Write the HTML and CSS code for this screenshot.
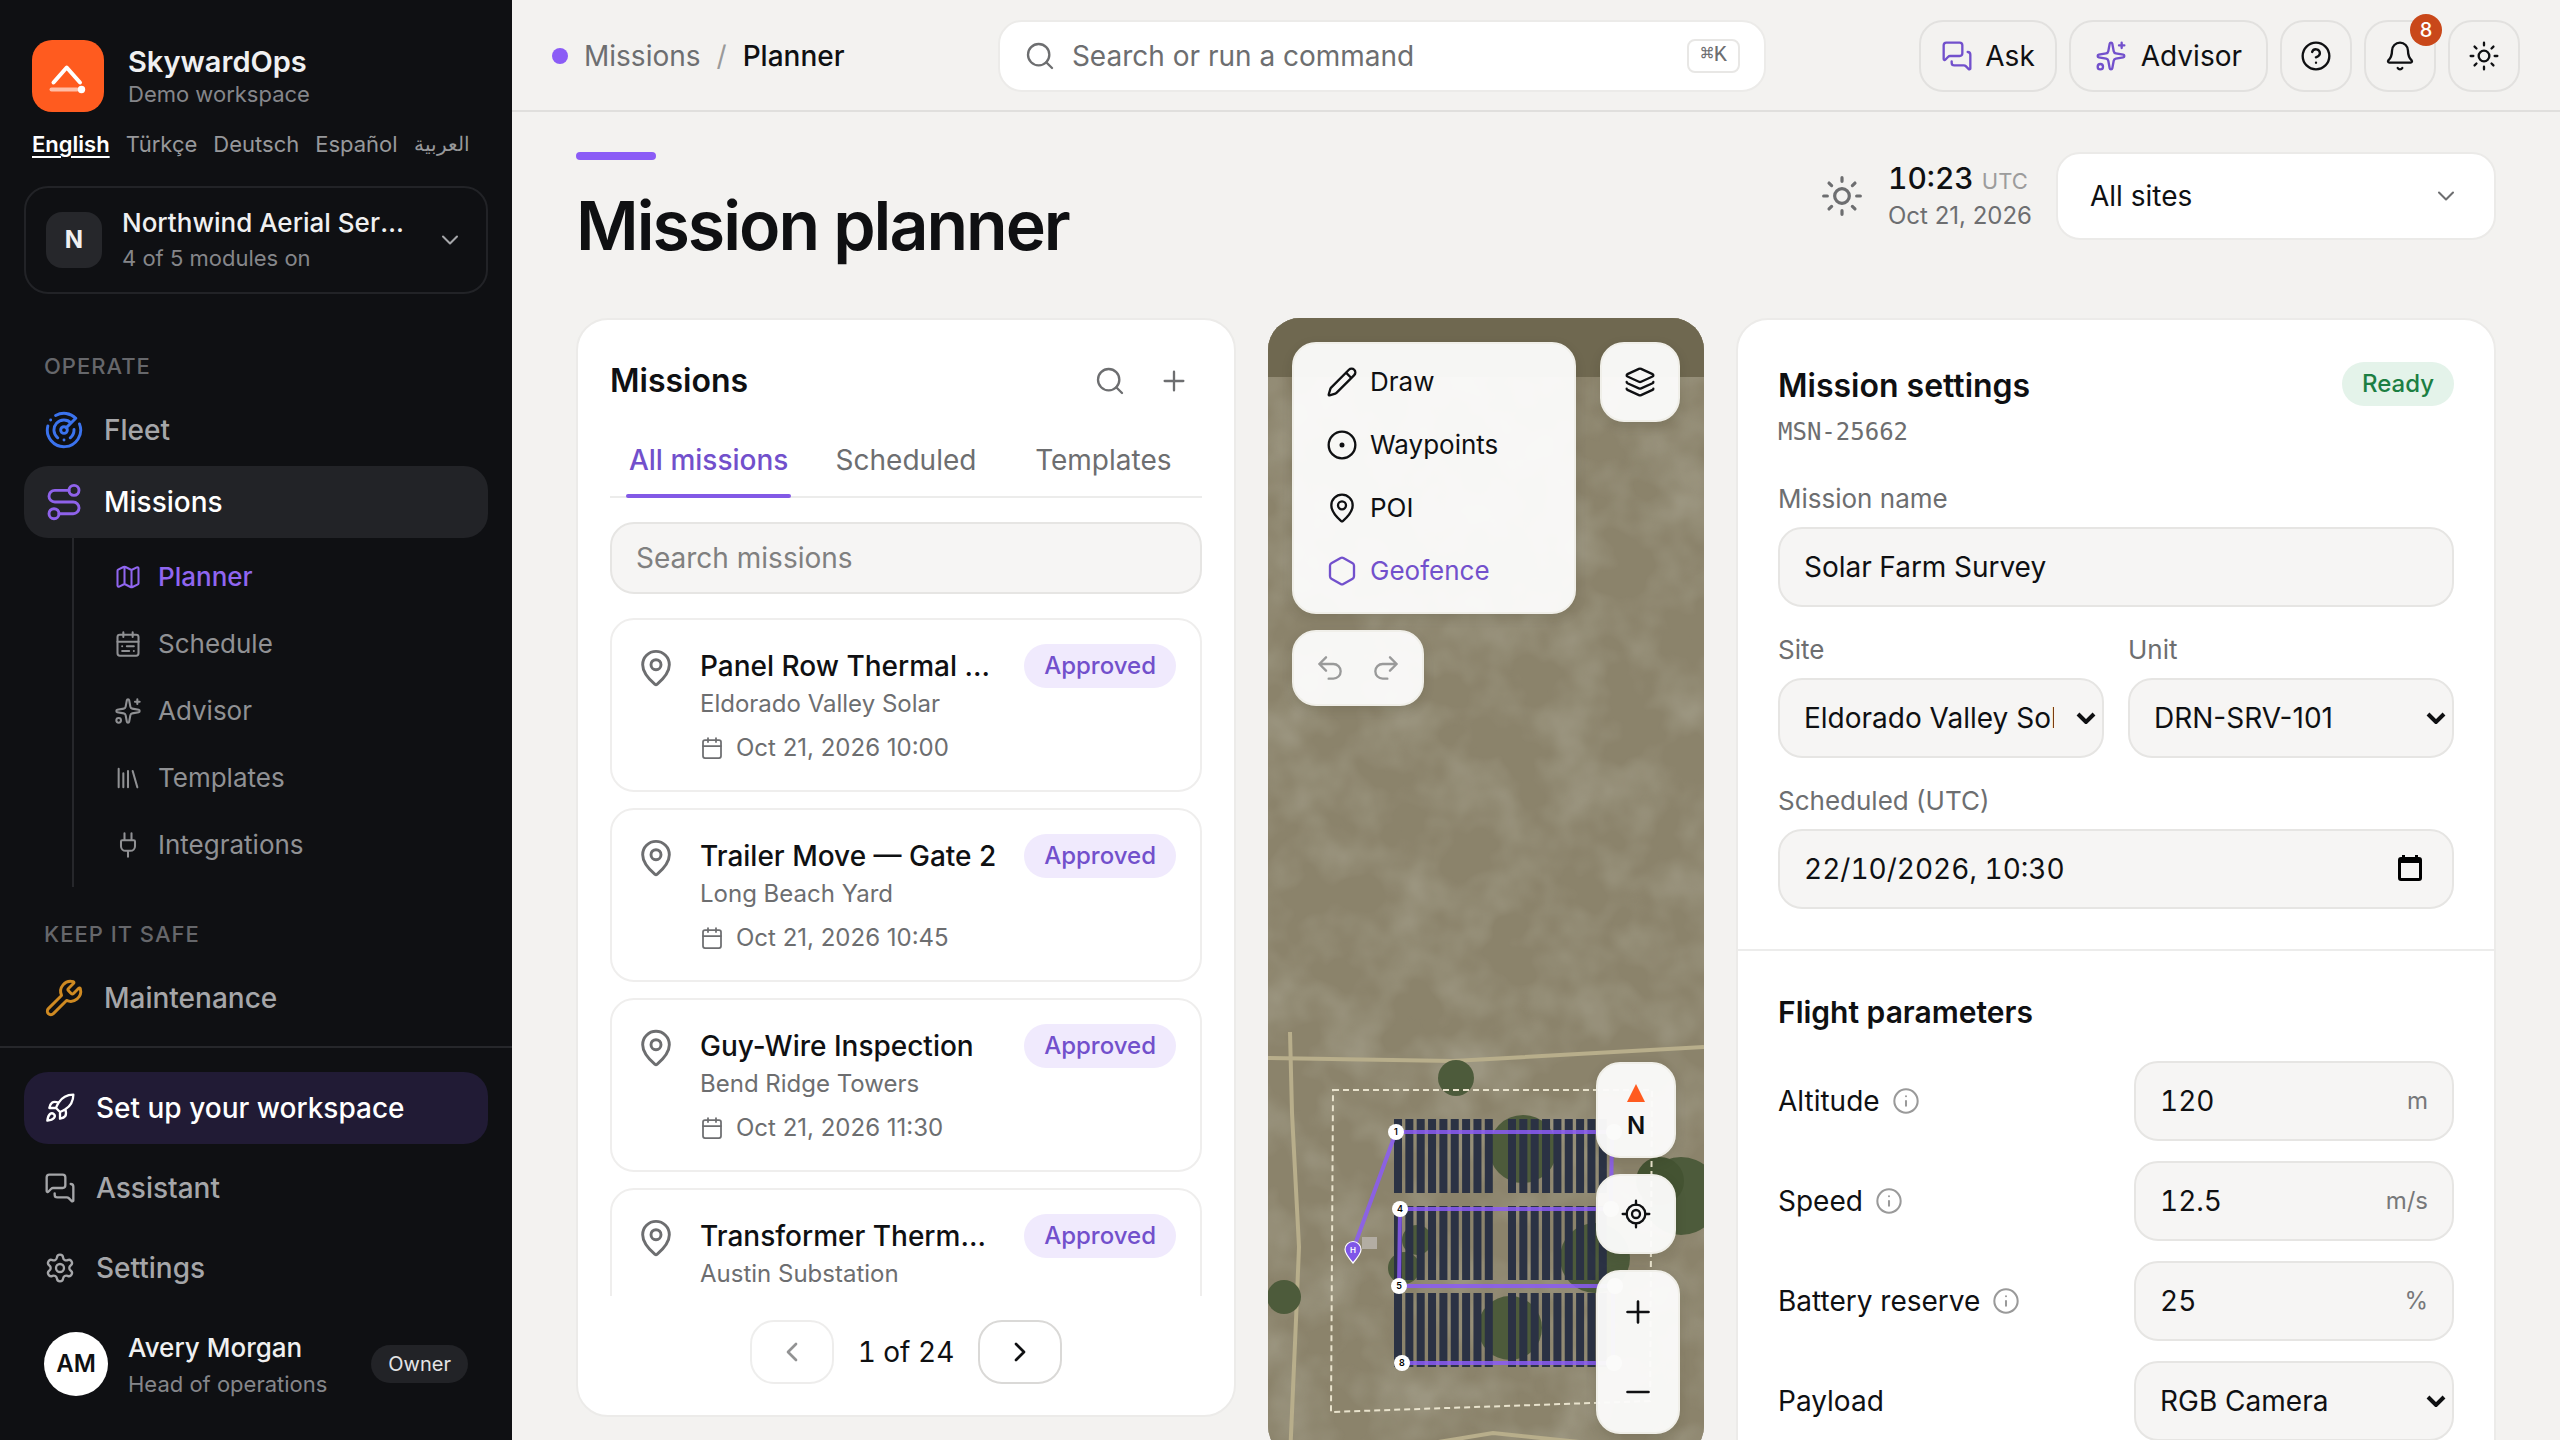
FILE: index.html
```html
<!DOCTYPE html>
<html lang="en">
<head>
<meta charset="utf-8">
<meta name="viewport" content="width=device-width, initial-scale=1">
<title>Mission planner – SkywardOps</title>
<link rel="stylesheet" href="styles.css">
</head>
<body>
<svg class="sprite" aria-hidden="true">
  <symbol id="i-radar" viewBox="0 0 24 24"><path d="M19.07 4.93A10 10 0 0 0 6.99 3.34M4 6h.01M2.29 9.62A10 10 0 1 0 21.31 8.35M16.24 7.76A6 6 0 1 0 8.23 16.67M12 18h.01M17.99 11.66A6 6 0 0 1 15.77 16.67M13.41 10.59l5.66-5.66"/><circle cx="12" cy="12" r="2"/></symbol>
  <symbol id="i-route" viewBox="0 0 24 24"><circle cx="6" cy="19" r="3"/><path d="M9 19h8.500a3.500 3.500 0 0 0 0-7h-11a3.500 3.500 0 0 1 0-7H15"/><circle cx="18" cy="5" r="3"/></symbol>
  <symbol id="i-map" viewBox="0 0 24 24"><path d="M14.106 5.553a2 2 0 0 0 1.788 0l3.659-1.830A1 1 0 0 1 21 4.619v12.764a1 1 0 0 1-.553.894l-4.553 2.277a2 2 0 0 1-1.788 0l-4.212-2.106a2 2 0 0 0-1.788 0l-3.659 1.830A1 1 0 0 1 3 19.381V6.618a1 1 0 0 1 .553-.894l4.553-2.277a2 2 0 0 1 1.788 0zM15 5.764v15M9 3.236v15"/></symbol>
  <symbol id="i-schedule" viewBox="0 0 24 24"><rect x="3" y="4" width="18" height="18" rx="2"/><path d="M16 2v4M3 10h18M8 2v4M17 14h-6M13 18H7M7 14h.01M17 18h.01"/></symbol>
  <symbol id="i-sparkles" viewBox="0 0 24 24"><path d="M11.017 2.814a1 1 0 0 1 1.966 0l1.051 5.558a2 2 0 0 0 1.594 1.594l5.558 1.051a1 1 0 0 1 0 1.966l-5.558 1.051a2 2 0 0 0-1.594 1.594l-1.051 5.558a1 1 0 0 1-1.966 0l-1.051-5.558a2 2 0 0 0-1.594-1.594l-5.558-1.051a1 1 0 0 1 0-1.966l5.558-1.051a2 2 0 0 0 1.594-1.594zM20 2v4M22 4h-4"/><circle cx="4" cy="20" r="2"/></symbol>
  <symbol id="i-library" viewBox="0 0 24 24"><path d="M16 6l4 14M12 6v14M8 8v12M4 4v16"/></symbol>
  <symbol id="i-plug" viewBox="0 0 24 24"><path d="M12 22v-5M9 8V2M15 8V2M17 8a1 1 0 0 1 1 1v4a4 4 0 0 1-4 4h-4a4 4 0 0 1-4-4V9a1 1 0 0 1 1-1z"/></symbol>
  <symbol id="i-wrench" viewBox="0 0 24 24"><path d="M14.7 6.3a1 1 0 0 0 0 1.400l1.600 1.600a1 1 0 0 0 1.400 0l3.106-3.105c.32-.322.863-.22.983.218a6 6 0 0 1-8.259 7.057l-7.910 7.910a1 1 0 0 1-2.999-3l7.910-7.910a6 6 0 0 1 7.057-8.259c.438.12.54.662.219.984z"/></symbol>
  <symbol id="i-rocket" viewBox="0 0 24 24"><path d="M4.5 16.5c-1.500 1.260-2 5-2 5s3.740-.5 5-2c.71-.84.7-2.130-.09-2.910a2.180 2.180 0 0 0-2.910-.09zM12 15l-3-3a22 22 0 0 1 2-3.950A12.880 12.880 0 0 1 22 2c0 2.720-.78 7.500-6 11a22.350 22.350 0 0 1-4 2zM9 12H4s.55-3.030 2-4c1.620-1.080 5 0 5 0M12 15v5s3.030-.55 4-2c1.080-1.620 0-5 0-5"/></symbol>
  <symbol id="i-chat" viewBox="0 0 24 24"><path d="M16 10a2 2 0 0 1-2 2H6.828a2 2 0 0 0-1.414.586l-2.202 2.202A.71.71 0 0 1 2 14.286V4a2 2 0 0 1 2-2h10a2 2 0 0 1 2 2zM20 9a2 2 0 0 1 2 2v10.286a.71.71 0 0 1-1.212.502l-2.202-2.202A2 2 0 0 0 17.172 19H10a2 2 0 0 1-2-2v-1"/></symbol>
  <symbol id="i-gear" viewBox="0 0 24 24"><path d="M9.671 4.136a2.340 2.340 0 0 1 4.659 0 2.340 2.340 0 0 0 3.319 1.915 2.340 2.340 0 0 1 2.330 4.033 2.340 2.340 0 0 0 0 3.831 2.340 2.340 0 0 1-2.330 4.033 2.340 2.340 0 0 0-3.319 1.915 2.340 2.340 0 0 1-4.659 0 2.340 2.340 0 0 0-3.320-1.915 2.340 2.340 0 0 1-2.330-4.033 2.340 2.340 0 0 0 0-3.831A2.340 2.340 0 0 1 6.350 6.051a2.340 2.340 0 0 0 3.319-1.915"/><circle cx="12" cy="12" r="3"/></symbol>
  <symbol id="i-search" viewBox="0 0 24 24"><circle cx="11" cy="11" r="8"/><path d="M21 21l-4.340-4.340"/></symbol>
  <symbol id="i-help" viewBox="0 0 24 24"><circle cx="12" cy="12" r="10"/><path d="M9.090 9a3 3 0 0 1 5.830 1c0 2-3 3-3 3M12 17h.01"/></symbol>
  <symbol id="i-bell" viewBox="0 0 24 24"><path d="M10.268 21a2 2 0 0 0 3.464 0M3.262 15.326A1 1 0 0 0 4 17h16a1 1 0 0 0 .74-1.673C19.410 13.956 18 12.499 18 8A6 6 0 0 0 6 8c0 4.499-1.411 5.956-2.738 7.326"/></symbol>
  <symbol id="i-sun" viewBox="0 0 24 24"><circle cx="12" cy="12" r="4"/><path d="M12 2v2M12 20v2M4.930 4.930l1.410 1.410M17.660 17.660l1.410 1.410M2 12h2M20 12h2M6.340 17.660l-1.410 1.410M19.070 4.930l-1.410 1.410"/></symbol>
  <symbol id="i-pin" viewBox="0 0 24 24"><path d="M20 10c0 4.993-5.539 10.193-7.399 11.799a1 1 0 0 1-1.202 0C9.539 20.193 4 14.993 4 10a8 8 0 0 1 16 0"/><circle cx="12" cy="10" r="3"/></symbol>
  <symbol id="i-calendar" viewBox="0 0 24 24"><path d="M8 2v4M16 2v4M3 10h18"/><rect x="3" y="4" width="18" height="18" rx="2"/></symbol>
  <symbol id="i-pencil" viewBox="0 0 24 24"><path d="M21.174 6.812a1 1 0 0 0-3.986-3.987L3.842 16.174a2 2 0 0 0-.5.83l-1.321 4.352a.5.5 0 0 0 .623.622l4.353-1.320a2 2 0 0 0 .83-.497zM15 5l4 4"/></symbol>
  <symbol id="i-dot" viewBox="0 0 24 24"><circle cx="12" cy="12" r="10"/><circle cx="12" cy="12" r="1"/></symbol>
  <symbol id="i-hexagon" viewBox="0 0 24 24"><path d="M21 16V8a2 2 0 0 0-1-1.730l-7-4a2 2 0 0 0-2 0l-7 4A2 2 0 0 0 3 8v8a2 2 0 0 0 1 1.730l7 4a2 2 0 0 0 2 0l7-4A2 2 0 0 0 21 16z"/></symbol>
  <symbol id="i-layers" viewBox="0 0 24 24"><path d="M12.830 2.180a2 2 0 0 0-1.660 0L2.600 6.080a1 1 0 0 0 0 1.830l8.580 3.910a2 2 0 0 0 1.660 0l8.580-3.900a1 1 0 0 0 0-1.830zM2 12a1 1 0 0 0 .58.91l8.600 3.910a2 2 0 0 0 1.650 0l8.580-3.900A1 1 0 0 0 22 12M2 17a1 1 0 0 0 .58.91l8.600 3.910a2 2 0 0 0 1.650 0l8.580-3.900A1 1 0 0 0 22 17"/></symbol>
  <symbol id="i-undo" viewBox="0 0 24 24"><path d="M9 14L4 9l5-5M4 9h10.500a5.500 5.500 0 0 1 0 11H11"/></symbol>
  <symbol id="i-redo" viewBox="0 0 24 24"><path d="M15 14l5-5-5-5M20 9H9.500a5.500 5.500 0 0 0 0 11H13"/></symbol>
  <symbol id="i-locate" viewBox="0 0 24 24"><path d="M2 12h3M19 12h3M12 2v3M12 19v3"/><circle cx="12" cy="12" r="7"/><circle cx="12" cy="12" r="3"/></symbol>
  <symbol id="i-info" viewBox="0 0 24 24"><circle cx="12" cy="12" r="10"/><path d="M12 16v-4M12 8h.01"/></symbol>
  <symbol id="i-plus" viewBox="0 0 24 24"><path d="M5 12h14M12 5v14"/></symbol>
  <symbol id="i-minus" viewBox="0 0 24 24"><path d="M5 12h14"/></symbol>
  <symbol id="i-down" viewBox="0 0 24 24"><path d="M6 9l6 6 6-6"/></symbol>
  <symbol id="i-left" viewBox="0 0 24 24"><path d="M15 18l-6-6 6-6"/></symbol>
  <symbol id="i-right" viewBox="0 0 24 24"><path d="M9 18l6-6-6-6"/></symbol>
</svg>

<div class="app">
  <aside class="sidebar">
    <div class="brand">
      <svg class="brand-mark" viewBox="0 0 72 72" aria-hidden="true">
        <rect width="72" height="72" rx="20" fill="#ff5b1f"/>
        <path d="M21.500 42.500L34.700 27.500 48 42.500" fill="none" stroke="#fff" stroke-width="4" stroke-linecap="round" stroke-linejoin="round"/>
        <path d="M19.500 49.500H45" stroke="#fff" stroke-opacity=".6" stroke-width="4" stroke-linecap="round"/>
        <circle cx="49.500" cy="49.500" r="3.700" fill="#fff"/>
      </svg>
      <div class="brand-text">
        <strong>SkywardOps</strong>
        <span>Demo workspace</span>
      </div>
    </div>
    <nav class="languages" aria-label="Language">
      <a class="current" href="#en">English</a>
      <a href="#tr">Türkçe</a>
      <a href="#de">Deutsch</a>
      <a href="#es">Español</a>
      <a href="#ar" lang="ar">العربية</a>
    </nav>
    <button class="workspace" type="button">
      <span class="workspace-tile">N</span>
      <span class="workspace-text">
        <span class="workspace-name">Northwind Aerial Services</span>
        <span class="workspace-sub">4 of 5 modules on</span>
      </span>
      <svg class="icon s28"><use href="#i-down"/></svg>
    </button>

    <nav class="nav" aria-label="Main">
      <h2>OPERATE</h2>
      <a class="nav-item" href="#fleet"><svg class="icon s40 blue"><use href="#i-radar"/></svg>Fleet</a>
      <a class="nav-item active" href="#missions"><svg class="icon s40 violet"><use href="#i-route"/></svg>Missions</a>
      <div class="subnav">
        <a class="current" href="#planner"><svg class="icon s28"><use href="#i-map"/></svg>Planner</a>
        <a href="#schedule"><svg class="icon s28"><use href="#i-schedule"/></svg>Schedule</a>
        <a href="#advisor"><svg class="icon s28"><use href="#i-sparkles"/></svg>Advisor</a>
        <a href="#templates"><svg class="icon s28"><use href="#i-library"/></svg>Templates</a>
        <a href="#integrations"><svg class="icon s28"><use href="#i-plug"/></svg>Integrations</a>
      </div>
      <h2>KEEP IT SAFE</h2>
      <a class="nav-item" href="#maintenance"><svg class="icon s40 amber"><use href="#i-wrench"/></svg>Maintenance</a>
    </nav>

    <div class="sidebar-foot">
      <a class="foot-item setup" href="#setup"><svg class="icon s32"><use href="#i-rocket"/></svg>Set up your workspace</a>
      <a class="foot-item" href="#assistant"><svg class="icon s32"><use href="#i-chat"/></svg>Assistant</a>
      <a class="foot-item" href="#settings"><svg class="icon s32"><use href="#i-gear"/></svg>Settings</a>
      <div class="profile">
        <span class="avatar">AM</span>
        <div class="profile-text">
          <strong>Avery Morgan</strong>
          <span>Head of operations</span>
        </div>
        <span class="role">Owner</span>
      </div>
    </div>
  </aside>

  <div class="main">
    <header class="topbar">
      <nav class="crumbs" aria-label="Breadcrumb">
        <span class="crumb-dot"></span>
        <a href="#missions">Missions</a>
        <span class="crumb-sep">/</span>
        <span class="crumb-current">Planner</span>
      </nav>
      <div class="command">
        <svg class="icon s32"><use href="#i-search"/></svg>
        <input type="text" placeholder="Search or run a command" aria-label="Search or run a command">
        <kbd>⌘K</kbd>
      </div>
      <div class="actions">
        <button class="action compact" type="button"><svg class="icon s32 purple"><use href="#i-chat"/></svg>Ask</button>
        <button class="action" type="button"><svg class="icon s32 purple"><use href="#i-sparkles"/></svg>Advisor</button>
        <button class="action square" type="button" aria-label="Help"><svg class="icon s32"><use href="#i-help"/></svg></button>
        <button class="action square" type="button" aria-label="Notifications"><svg class="icon s32"><use href="#i-bell"/></svg><span class="count">8</span></button>
        <button class="action square" type="button" aria-label="Theme"><svg class="icon s32"><use href="#i-sun"/></svg></button>
      </div>
    </header>

    <main class="content">
      <div class="page-head">
        <div class="page-title">
          <span class="accent"></span>
          <h1>Mission planner</h1>
        </div>
        <div class="page-tools">
          <svg class="icon weather"><use href="#i-sun"/></svg>
          <div class="clock">
            <div class="time">10:23 <span>UTC</span></div>
            <div class="date">Oct 21, 2026</div>
          </div>
          <div class="picker site-filter">
            <select aria-label="Sites"><option>All sites</option></select>
            <svg class="icon s28"><use href="#i-down"/></svg>
          </div>
        </div>
      </div>

      <div class="columns">
        <section class="card missions">
          <div class="missions-head">
            <h2>Missions</h2>
            <div class="head-buttons">
              <button type="button" aria-label="Search"><svg class="icon s32"><use href="#i-search"/></svg></button>
              <button type="button" aria-label="Add mission"><svg class="icon s32"><use href="#i-plus"/></svg></button>
            </div>
          </div>
          <div class="tabs" role="tablist">
            <button class="selected" type="button" role="tab" aria-selected="true">All missions</button>
            <button type="button" role="tab" aria-selected="false">Scheduled</button>
            <button type="button" role="tab" aria-selected="false">Templates</button>
          </div>
          <input class="mission-search" type="text" placeholder="Search missions" aria-label="Search missions">
          <ul class="mission-list">
            <li class="mission">
              <svg class="icon s40"><use href="#i-pin"/></svg>
              <div class="mission-body">
                <div class="mission-top"><h3>Panel Row Thermal Survey</h3><span class="badge">Approved</span></div>
                <p class="mission-site">Eldorado Valley Solar</p>
                <p class="mission-date"><svg class="icon s24"><use href="#i-calendar"/></svg>Oct 21, 2026 10:00</p>
              </div>
            </li>
            <li class="mission">
              <svg class="icon s40"><use href="#i-pin"/></svg>
              <div class="mission-body">
                <div class="mission-top"><h3>Trailer Move — Gate 2</h3><span class="badge">Approved</span></div>
                <p class="mission-site">Long Beach Yard</p>
                <p class="mission-date"><svg class="icon s24"><use href="#i-calendar"/></svg>Oct 21, 2026 10:45</p>
              </div>
            </li>
            <li class="mission">
              <svg class="icon s40"><use href="#i-pin"/></svg>
              <div class="mission-body">
                <div class="mission-top"><h3>Guy-Wire Inspection</h3><span class="badge">Approved</span></div>
                <p class="mission-site">Bend Ridge Towers</p>
                <p class="mission-date"><svg class="icon s24"><use href="#i-calendar"/></svg>Oct 21, 2026 11:30</p>
              </div>
            </li>
            <li class="mission">
              <svg class="icon s40"><use href="#i-pin"/></svg>
              <div class="mission-body">
                <div class="mission-top"><h3>Transformer Thermal Scan</h3><span class="badge">Approved</span></div>
                <p class="mission-site">Austin Substation</p>
              </div>
            </li>
          </ul>
          <div class="pager">
            <button type="button" disabled aria-label="Previous page"><svg class="icon s32"><use href="#i-left"/></svg></button>
            <span>1 of 24</span>
            <button type="button" aria-label="Next page"><svg class="icon s32"><use href="#i-right"/></svg></button>
          </div>
        </section>

        <section class="map" aria-label="Map">
          <svg class="terrain" viewBox="0 0 436 1140" preserveAspectRatio="xMidYMin slice" aria-hidden="true">
            <defs>
              <filter id="soil" x="0" y="0" width="100%" height="100%">
                <feTurbulence type="fractalNoise" baseFrequency=".018" numOctaves="3" seed="7"/>
                <feColorMatrix values="0 0 0 0 .42  0 0 0 0 .40  0 0 0 0 .31  2.200 0 0 0 -.85"/>
              </filter>
            </defs>
            <rect width="436" height="1140" fill="#8b836b"/>
            <rect width="436" height="1140" filter="url(#soil)" opacity=".5"/>
            <rect width="436" height="59" fill="#6f6850"/>
            <g fill="none" stroke="#b8ae8b" stroke-width="4">
              <path d="M22 714L24 795 31 929 28 1002 22 1140"/>
              <path d="M0 740L185 743 436 729"/>
              <path d="M140 1129L225 1115 340 1127"/>
            </g>
            <g fill="#4d5b3b">
              <circle cx="188" cy="760" r="18"/>
              <circle cx="255" cy="831" r="34"/>
              <circle cx="16" cy="979" r="17"/>
              <circle cx="413" cy="878" r="39"/>
              <circle cx="392" cy="863" r="24" fill="#445332"/>
              <circle cx="149" cy="922" r="15"/>
              <circle cx="136" cy="950" r="16"/>
              <circle cx="327" cy="940" r="35"/>
              <circle cx="242" cy="1010" r="32"/>
            </g>
            <g stroke="#2b3244" stroke-width="74" stroke-dasharray="8 3.350">
              <path d="M126 838H225M240 838H339M126 925H225M240 925H339M126 1012H225M240 1012H339"/>
            </g>
            <rect x="94" y="919" width="15" height="12" fill="#b3ada3"/>
            <path d="M65 772H384L382 1083 63 1094Z" fill="none" stroke="#e9e3cd" stroke-width="2" stroke-dasharray="6 4"/>
            <path d="M85 932L128 814H344L343 891H132L131 968H345V1045H134" fill="none" stroke="#8b5cf6" stroke-opacity=".85" stroke-width="4" stroke-linejoin="round"/>
            <g class="waypoints">
              <circle cx="128" cy="814" r="8"/><circle cx="346" cy="814" r="8"/>
              <circle cx="343" cy="891" r="8"/><circle cx="132" cy="891" r="8"/>
              <circle cx="131" cy="968" r="8"/><circle cx="347" cy="968" r="8"/>
              <circle cx="346" cy="1045" r="8"/><circle cx="134" cy="1045" r="8"/>
              <text x="128" y="817">1</text><text x="132" y="894">4</text>
              <text x="131" y="971">5</text><text x="134" y="1048">8</text>
            </g>
            <path d="M85 945C79 938 77 935 77 931.500a8 8 0 0 1 16 0C93 935 91 938 85 945z" fill="#7f56e8" stroke="#fff" stroke-width="1.200"/>
            <text class="home" x="85" y="935">H</text>
          </svg>
          <div class="map-top">
            <div class="map-left">
              <div class="map-panel tools">
                <button type="button"><svg class="icon s32"><use href="#i-pencil"/></svg>Draw</button>
                <button type="button"><svg class="icon s32"><use href="#i-dot"/></svg>Waypoints</button>
                <button type="button"><svg class="icon s32"><use href="#i-pin"/></svg>POI</button>
                <button class="on" type="button"><svg class="icon s32"><use href="#i-hexagon"/></svg>Geofence</button>
              </div>
              <div class="map-panel history">
                <button type="button" disabled aria-label="Undo"><svg class="icon s32"><use href="#i-undo"/></svg></button>
                <button type="button" disabled aria-label="Redo"><svg class="icon s32"><use href="#i-redo"/></svg></button>
              </div>
            </div>
            <button class="map-panel map-button" type="button" aria-label="Layers"><svg class="icon s32"><use href="#i-layers"/></svg></button>
          </div>
          <div class="map-bottom">
            <button class="map-panel compass" type="button" aria-label="Point north">
              <svg width="18" height="18" viewBox="0 0 18 18"><path d="M9 0l9 18H0z" fill="#ff5b1f"/></svg>
              <span>N</span>
            </button>
            <button class="map-panel map-button" type="button" aria-label="Locate"><svg class="icon s32"><use href="#i-locate"/></svg></button>
            <div class="map-panel zoom">
              <button type="button" aria-label="Zoom in"><svg class="icon s36"><use href="#i-plus"/></svg></button>
              <button type="button" aria-label="Zoom out"><svg class="icon s36"><use href="#i-minus"/></svg></button>
            </div>
          </div>
        </section>

        <form class="card settings">
          <div class="group">
            <div class="settings-head">
              <div>
                <h2>Mission settings</h2>
                <p class="mission-id">MSN-25662</p>
              </div>
              <span class="badge ready">Ready</span>
            </div>
            <div class="field">
              <label for="name">Mission name</label>
              <input class="box" id="name" type="text" value="Solar Farm Survey">
            </div>
            <div class="pair">
              <div class="field">
                <label for="site">Site</label>
                <div class="picker">
                  <select class="box" id="site"><option>Eldorado Valley Solar</option></select>
                  <svg class="caret" viewBox="0 0 20 12"><path d="M2 2l8 8 8-8"/></svg>
                </div>
              </div>
              <div class="field">
                <label for="unit">Unit</label>
                <div class="picker">
                  <select class="box" id="unit"><option>DRN-SRV-101</option></select>
                  <svg class="caret" viewBox="0 0 20 12"><path d="M2 2l8 8 8-8"/></svg>
                </div>
              </div>
            </div>
            <div class="field">
              <label for="when">Scheduled (UTC)</label>
              <div class="picker">
                <input class="box" id="when" type="text" value="22/10/2026, 10:30">
                <svg class="date-icon" viewBox="0 0 24 26"><path fill-rule="evenodd" d="M4 0h3v2h10V0h3v2h1a3 3 0 0 1 3 3v18a3 3 0 0 1-3 3H3a3 3 0 0 1-3-3V5a3 3 0 0 1 3-3h1zM3 8v15h18V8z"/></svg>
              </div>
            </div>
          </div>
          <div class="group params">
            <h3>Flight parameters</h3>
            <div class="param">
              <label for="alt">Altitude</label><svg class="icon s28"><use href="#i-info"/></svg>
              <div class="picker"><input class="box" id="alt" type="text" inputmode="decimal" value="120"><span class="unit">m</span></div>
            </div>
            <div class="param">
              <label for="speed">Speed</label><svg class="icon s28"><use href="#i-info"/></svg>
              <div class="picker"><input class="box" id="speed" type="text" inputmode="decimal" value="12.5"><span class="unit">m/s</span></div>
            </div>
            <div class="param">
              <label for="battery">Battery reserve</label><svg class="icon s28"><use href="#i-info"/></svg>
              <div class="picker"><input class="box" id="battery" type="text" inputmode="decimal" value="25"><span class="unit">%</span></div>
            </div>
            <div class="param">
              <label for="payload">Payload</label>
              <div class="picker">
                <select class="box" id="payload"><option>RGB Camera</option></select>
                <svg class="caret" viewBox="0 0 20 12"><path d="M2 2l8 8 8-8"/></svg>
              </div>
            </div>
          </div>
        </form>
      </div>
    </main>
  </div>
</div>
</body>
</html>
```

FILE: styles.css
```css
:root {
  --ink: #0f1012;
  --muted: #6d6e70;
  --line: #e6e5e3;
  --page: #f3f2f0;
  --field: #f6f5f4;
  --violet: #8b5cf6;
  --purple: #7250cc;
}

* { box-sizing: border-box; }

body {
  margin: 0;
  font-family: Inter, "Liberation Sans", sans-serif;
  font-size: 28px;
  line-height: 36px;
  color: var(--ink);
  background: var(--page);
}

h1, h2, h3, p, ul { margin: 0; padding: 0; }
button, input, select { font: inherit; color: inherit; }
button { padding: 0; border: 0; background: none; cursor: pointer; }
a { color: inherit; text-decoration: none; }

.sprite { display: none; }

.icon {
  flex: none;
  width: 32px;
  height: 32px;
  fill: none;
  stroke: currentColor;
  stroke-width: 1.75;
  stroke-linecap: round;
  stroke-linejoin: round;
}
.s24 { width: 24px; height: 24px; }
.s28 { width: 28px; height: 28px; }
.s32 { width: 32px; height: 32px; }
.s36 { width: 36px; height: 36px; }
.s40 { width: 40px; height: 40px; }
.blue { color: #3b73ee; }
.violet { color: #8f62ea; }
.amber { color: #cf8a22; }
.purple { color: var(--purple); }

.app {
  display: grid;
  grid-template-columns: 512px minmax(0, 1fr);
  height: 100vh;
  overflow: hidden;
}

/* Sidebar */
.sidebar {
  display: flex;
  flex-direction: column;
  min-height: 0;
  background: #0f1013;
  color: #a5a6a9;
}
.brand {
  display: flex;
  align-items: center;
  gap: 24px;
  padding: 40px 32px 0;
}
.brand-mark { width: 72px; height: 72px; }
.brand-text { display: flex; flex-direction: column; }
.brand-text strong { font-size: 29px; line-height: 36px; font-weight: 600; color: #f0f0f1; }
.brand-text span { font-size: 22px; line-height: 28px; color: #85868a; }

.languages {
  display: flex;
  gap: 16px;
  padding: 16px 32px 0;
  font-size: 22px;
  line-height: 32px;
  color: #97989b;
}
.languages .current {
  color: #fff;
  font-weight: 600;
  text-decoration: underline;
  text-underline-offset: 4px;
  text-decoration-thickness: 2px;
}
.languages [lang="ar"] { font-size: 20px; }

.workspace {
  display: flex;
  align-items: center;
  gap: 20px;
  height: 108px;
  margin: 26px 24px 0;
  padding: 0 22px 0 20px;
  border: 2px solid #222327;
  border-radius: 24px;
  text-align: left;
  flex: none;
}
.workspace-tile {
  flex: none;
  width: 56px;
  border-radius: 16px;
  background: #26272b;
  color: #f0f0f1;
  font-size: 24px;
  font-weight: 700;
  line-height: 56px;
  text-align: center;
}
.workspace-text { display: flex; flex-direction: column; flex: 1; min-width: 0; }
.workspace-name {
  overflow: hidden;
  font-size: 26px;
  font-weight: 500;
  color: #f0f0f1;
  white-space: nowrap;
  text-overflow: ellipsis;
}
.workspace-sub { font-size: 22px; line-height: 34px; color: #85868a; }

.nav { flex: 1; min-height: 0; padding: 46px 24px 0; overflow: hidden; }
.nav h2 {
  padding: 10px 20px 12px;
  font-size: 22px;
  line-height: 32px;
  font-weight: 500;
  letter-spacing: 1px;
  color: #66676b;
}
.nav-item {
  display: flex;
  align-items: center;
  gap: 20px;
  height: 72px;
  padding: 0 20px;
  border-radius: 24px;
  font-weight: 500;
}
.nav-item.active { background: #222327; color: #fff; }
.subnav {
  display: grid;
  gap: 11px;
  margin: 0 0 21px 48px;
  padding: 11px 0 14px 40px;
  border-left: 2px solid #26272b;
  font-size: 26px;
  color: #909194;
}
.subnav a { display: flex; align-items: center; gap: 16px; height: 56px; }
.subnav .current { color: #9066f0; font-weight: 500; }

.sidebar-foot {
  display: grid;
  gap: 8px;
  padding: 24px;
  border-top: 2px solid #26272b;
}
.foot-item {
  display: flex;
  align-items: center;
  gap: 20px;
  height: 72px;
  padding: 0 20px;
  border-radius: 24px;
  font-weight: 500;
}
.foot-item.setup { background: #211b35; color: #fff; }
.profile { display: flex; align-items: center; gap: 20px; height: 104px; padding: 0 20px; }
.avatar {
  flex: none;
  width: 64px;
  border-radius: 50%;
  background: #fff;
  color: var(--ink);
  font-size: 24px;
  font-weight: 600;
  line-height: 64px;
  text-align: center;
}
.profile-text { display: flex; flex-direction: column; flex: 1; padding-top: 4px; }
.profile-text strong { font-size: 26px; font-weight: 500; color: #f0f0f1; }
.profile-text span { font-size: 22px; color: #85868a; }
.role {
  padding: 0 17px;
  border-radius: 19px;
  background: #222327;
  color: #e4e4e6;
  font-size: 20px;
  line-height: 38px;
}

/* Top bar */
.main { min-width: 0; overflow: auto; scrollbar-width: none; }
.topbar {
  display: flex;
  align-items: center;
  justify-content: space-between;
  gap: 24px;
  height: 112px;
  padding: 2px 40px 0;
  border-bottom: 2px solid #e0dfdd;
}
.crumbs { display: flex; align-items: center; gap: 16px; color: var(--muted); }
.crumb-dot { width: 16px; height: 16px; border-radius: 50%; background: var(--violet); }
.crumb-sep { color: #9a9a9a; }
.crumb-current { color: var(--ink); font-weight: 500; }
.command {
  display: flex;
  align-items: center;
  gap: 16px;
  width: 768px;
  height: 72px;
  padding: 0 24px;
  border: 2px solid #ecebe9;
  border-radius: 24px;
  background: #fff;
  color: var(--muted);
}
.command input { flex: 1; min-width: 0; padding: 0; border: 0; background: none; outline: 0; }
::placeholder { color: var(--muted); opacity: 1; }
kbd {
  padding: 0 11px;
  border: 2px solid #e8e7e5;
  border-radius: 8px;
  font-family: "Liberation Mono", monospace;
  font-size: 22px;
  line-height: 30px;
}
.actions { display: flex; gap: 12px; }
.action {
  position: relative;
  display: flex;
  align-items: center;
  justify-content: center;
  gap: 14px;
  height: 72px;
  padding: 0 24px;
  border: 2px solid #e2e1df;
  border-radius: 24px;
}
.action.compact { gap: 12px; padding: 0 20px; }
.action.square { width: 72px; padding: 0; }
.count {
  position: absolute;
  top: -8px;
  right: -8px;
  width: 32px;
  border-radius: 50%;
  background: #c9481a;
  color: #fff;
  font-size: 20px;
  font-weight: 500;
  line-height: 32px;
  text-align: center;
}

/* Page head */
.content { padding: 40px 64px 24px; }
.page-head { display: flex; justify-content: space-between; margin-bottom: 30px; }
.page-title { display: grid; gap: 24px; align-content: start; height: 136px; }
.accent { width: 80px; height: 8px; border-radius: 4px; background: var(--violet); }
h1 { font-size: 68px; line-height: 82px; font-weight: 600; letter-spacing: -2px; }
.page-tools { display: flex; align-items: center; gap: 24px; height: 88px; }
.weather { width: 44px; height: 44px; color: var(--muted); stroke-width: 1.75; }
.time { font-size: 30px; font-weight: 500; font-variant-numeric: tabular-nums; }
.time span { font-size: 22px; font-weight: 400; color: #9c9c9c; }
.date { font-size: 24px; line-height: 34px; color: var(--muted); }

.picker { position: relative; }
.picker select { width: 100%; appearance: none; cursor: pointer; }
.site-filter { width: 440px; }
.site-filter select {
  height: 88px;
  padding: 0 72px 0 32px;
  border: 2px solid #ebeae8;
  border-radius: 24px;
  background: #fff;
}
.site-filter .icon { position: absolute; top: 30px; right: 36px; color: var(--muted); pointer-events: none; }

/* Columns */
.columns {
  display: grid;
  grid-template-columns: 660px minmax(0, 1fr) 760px;
  gap: 32px;
  align-items: start;
}
.card { border: 2px solid #ecebe9; border-radius: 32px; background: #fff; }
.card h2 { font-size: 32px; line-height: 40px; font-weight: 600; }

.missions {
  display: flex;
  flex-direction: column;
  height: calc(100vh - 341px);
  padding: 32px 32px 31px;
}
.missions-head { display: flex; align-items: center; justify-content: space-between; height: 58px; }
.head-buttons { display: flex; margin-right: -4px; }
.head-buttons button { display: grid; place-items: center; width: 64px; height: 56px; color: var(--muted); }
.tabs {
  display: grid;
  grid-template-columns: repeat(3, 1fr);
  flex: none;
  margin: 14px 0 24px;
  border-bottom: 2px solid #ececeb;
}
.tabs button { position: relative; height: 72px; color: var(--muted); font-weight: 400; }
.tabs .selected { color: var(--purple); font-weight: 500; }
.tabs .selected::after {
  content: "";
  position: absolute;
  right: 16px;
  bottom: -2px;
  left: 16px;
  height: 4px;
  border-radius: 2px;
  background: #8259e6;
}
.mission-search {
  flex: none;
  height: 72px;
  padding: 0 24px;
  border: 2px solid var(--line);
  border-radius: 24px;
  background: var(--field);
}
.mission-search::placeholder { color: #808080; }
.mission-list {
  display: grid;
  grid-template-columns: minmax(0, 1fr);
  grid-auto-rows: 174px;
  gap: 16px;
  flex: 1;
  align-content: start;
  min-height: 0;
  margin: 24px 0;
  overflow: hidden;
  list-style: none;
}
.mission {
  display: flex;
  gap: 24px;
  padding: 24px;
  border: 2px solid #efeeed;
  border-radius: 24px;
}
.mission > .icon { margin-top: 4px; color: var(--muted); }
.mission-body { flex: 1; min-width: 0; }
.mission-top { display: flex; align-items: center; gap: 24px; height: 44px; }
.mission h3 {
  flex: 1;
  min-width: 0;
  overflow: hidden;
  font-size: 28px;
  font-weight: 500;
  white-space: nowrap;
  text-overflow: ellipsis;
}
.mission-site { font-size: 24px; line-height: 32px; color: var(--muted); }
.mission-date {
  display: flex;
  align-items: center;
  gap: 12px;
  margin-top: 12px;
  font-size: 24px;
  line-height: 32px;
  color: var(--muted);
}
.badge {
  flex: none;
  padding: 0 20px;
  border-radius: 22px;
  background: #f0eafd;
  color: var(--purple);
  font-size: 24px;
  font-weight: 500;
  line-height: 44px;
}
.pager {
  display: flex;
  align-items: center;
  justify-content: center;
  gap: 24px;
  flex: none;
  font-variant-numeric: tabular-nums;
}
.pager button {
  display: grid;
  place-items: center;
  width: 84px;
  height: 64px;
  border: 2px solid #dad9d7;
  border-radius: 24px;
}
.pager button:disabled { opacity: .45; }
.pager .icon { stroke-width: 2; }

/* Map */
.map {
  position: relative;
  height: calc(100vh - 300px);
  overflow: hidden;
  border-radius: 32px;
  background: #8b836b;
}
.terrain { display: block; width: 100%; height: 100%; }
.waypoints circle { fill: #fff; }
.waypoints text, .home { font-size: 9px; font-weight: 600; text-anchor: middle; }
.home { fill: #fff; font-size: 8px; }
.map-panel {
  border: 2px solid #f0efe9;
  border-radius: 24px;
  background: rgb(251 251 250 / 97%);
  box-shadow: 0 4px 12px rgb(30 30 20 / 12%);
}
.map-top {
  position: absolute;
  inset: 24px 24px auto;
  display: flex;
  align-items: flex-start;
  justify-content: space-between;
}
.map-left { display: grid; gap: 16px; justify-items: start; }
.tools { display: grid; width: 284px; padding: 6px 8px 10px; }
.tools button {
  display: flex;
  align-items: center;
  gap: 12px;
  height: 63px;
  padding: 0 24px;
  font-size: 26px;
}
.tools .on { color: var(--purple); }
.history { display: flex; padding: 8px; }
.history button { display: grid; place-items: center; width: 56px; height: 56px; opacity: .4; }
.map-button { display: grid; place-items: center; width: 80px; height: 80px; }
.map-bottom {
  position: absolute;
  right: 24px;
  bottom: 24px;
  display: grid;
  gap: 16px;
}
.compass {
  display: grid;
  gap: 10px;
  place-items: center;
  align-content: center;
  width: 80px;
  height: 96px;
  padding-top: 4px;
  font-size: 24px;
  line-height: 28px;
  font-weight: 600;
}
.zoom { display: grid; width: 84px; }
.zoom button { display: grid; place-items: center; height: 80px; }

/* Settings */
.group { display: grid; gap: 25px; padding: 42px 40px 40px; }
.settings-head { display: flex; align-items: flex-start; justify-content: space-between; margin-bottom: 4px; }
.settings-head > div { padding-top: 4px; }
.mission-id {
  margin-top: 6px;
  font-family: "DejaVu Sans Mono", monospace;
  font-size: 24px;
  line-height: 40px;
  color: var(--muted);
}
.badge.ready { background: #e4f3ea; color: #1c7f43; }
.field { display: grid; gap: 10px; min-width: 0; }
.field label { font-size: 26px; color: var(--muted); }
.pair { display: grid; grid-template-columns: 1fr 1fr; gap: 24px; }
.box {
  width: 100%;
  height: 80px;
  padding: 0 24px;
  border: 2px solid var(--line);
  border-radius: 24px;
  background: var(--field);
}
input.box { font-variant-numeric: tabular-nums; }
select.box { padding-right: 48px; }
.caret {
  position: absolute;
  top: 34px;
  right: 8px;
  width: 20px;
  height: 12px;
  fill: none;
  stroke: currentColor;
  stroke-width: 4;
  pointer-events: none;
}
.date-icon { position: absolute; top: 26px; right: 32px; width: 24px; height: 26px; }
.params { gap: 20px; padding: 40px; border-top: 2px solid #ececeb; }
.params h3 { margin-bottom: 8px; font-size: 30px; line-height: 42px; font-weight: 600; }
.param { display: flex; align-items: center; gap: 12px; }
.param > .icon { color: #9a9a9a; stroke-width: 1.75; }
.param .picker { width: 320px; margin-left: auto; }
.unit {
  position: absolute;
  top: 22px;
  right: 26px;
  font-size: 24px;
  color: #77787a;
}
```
